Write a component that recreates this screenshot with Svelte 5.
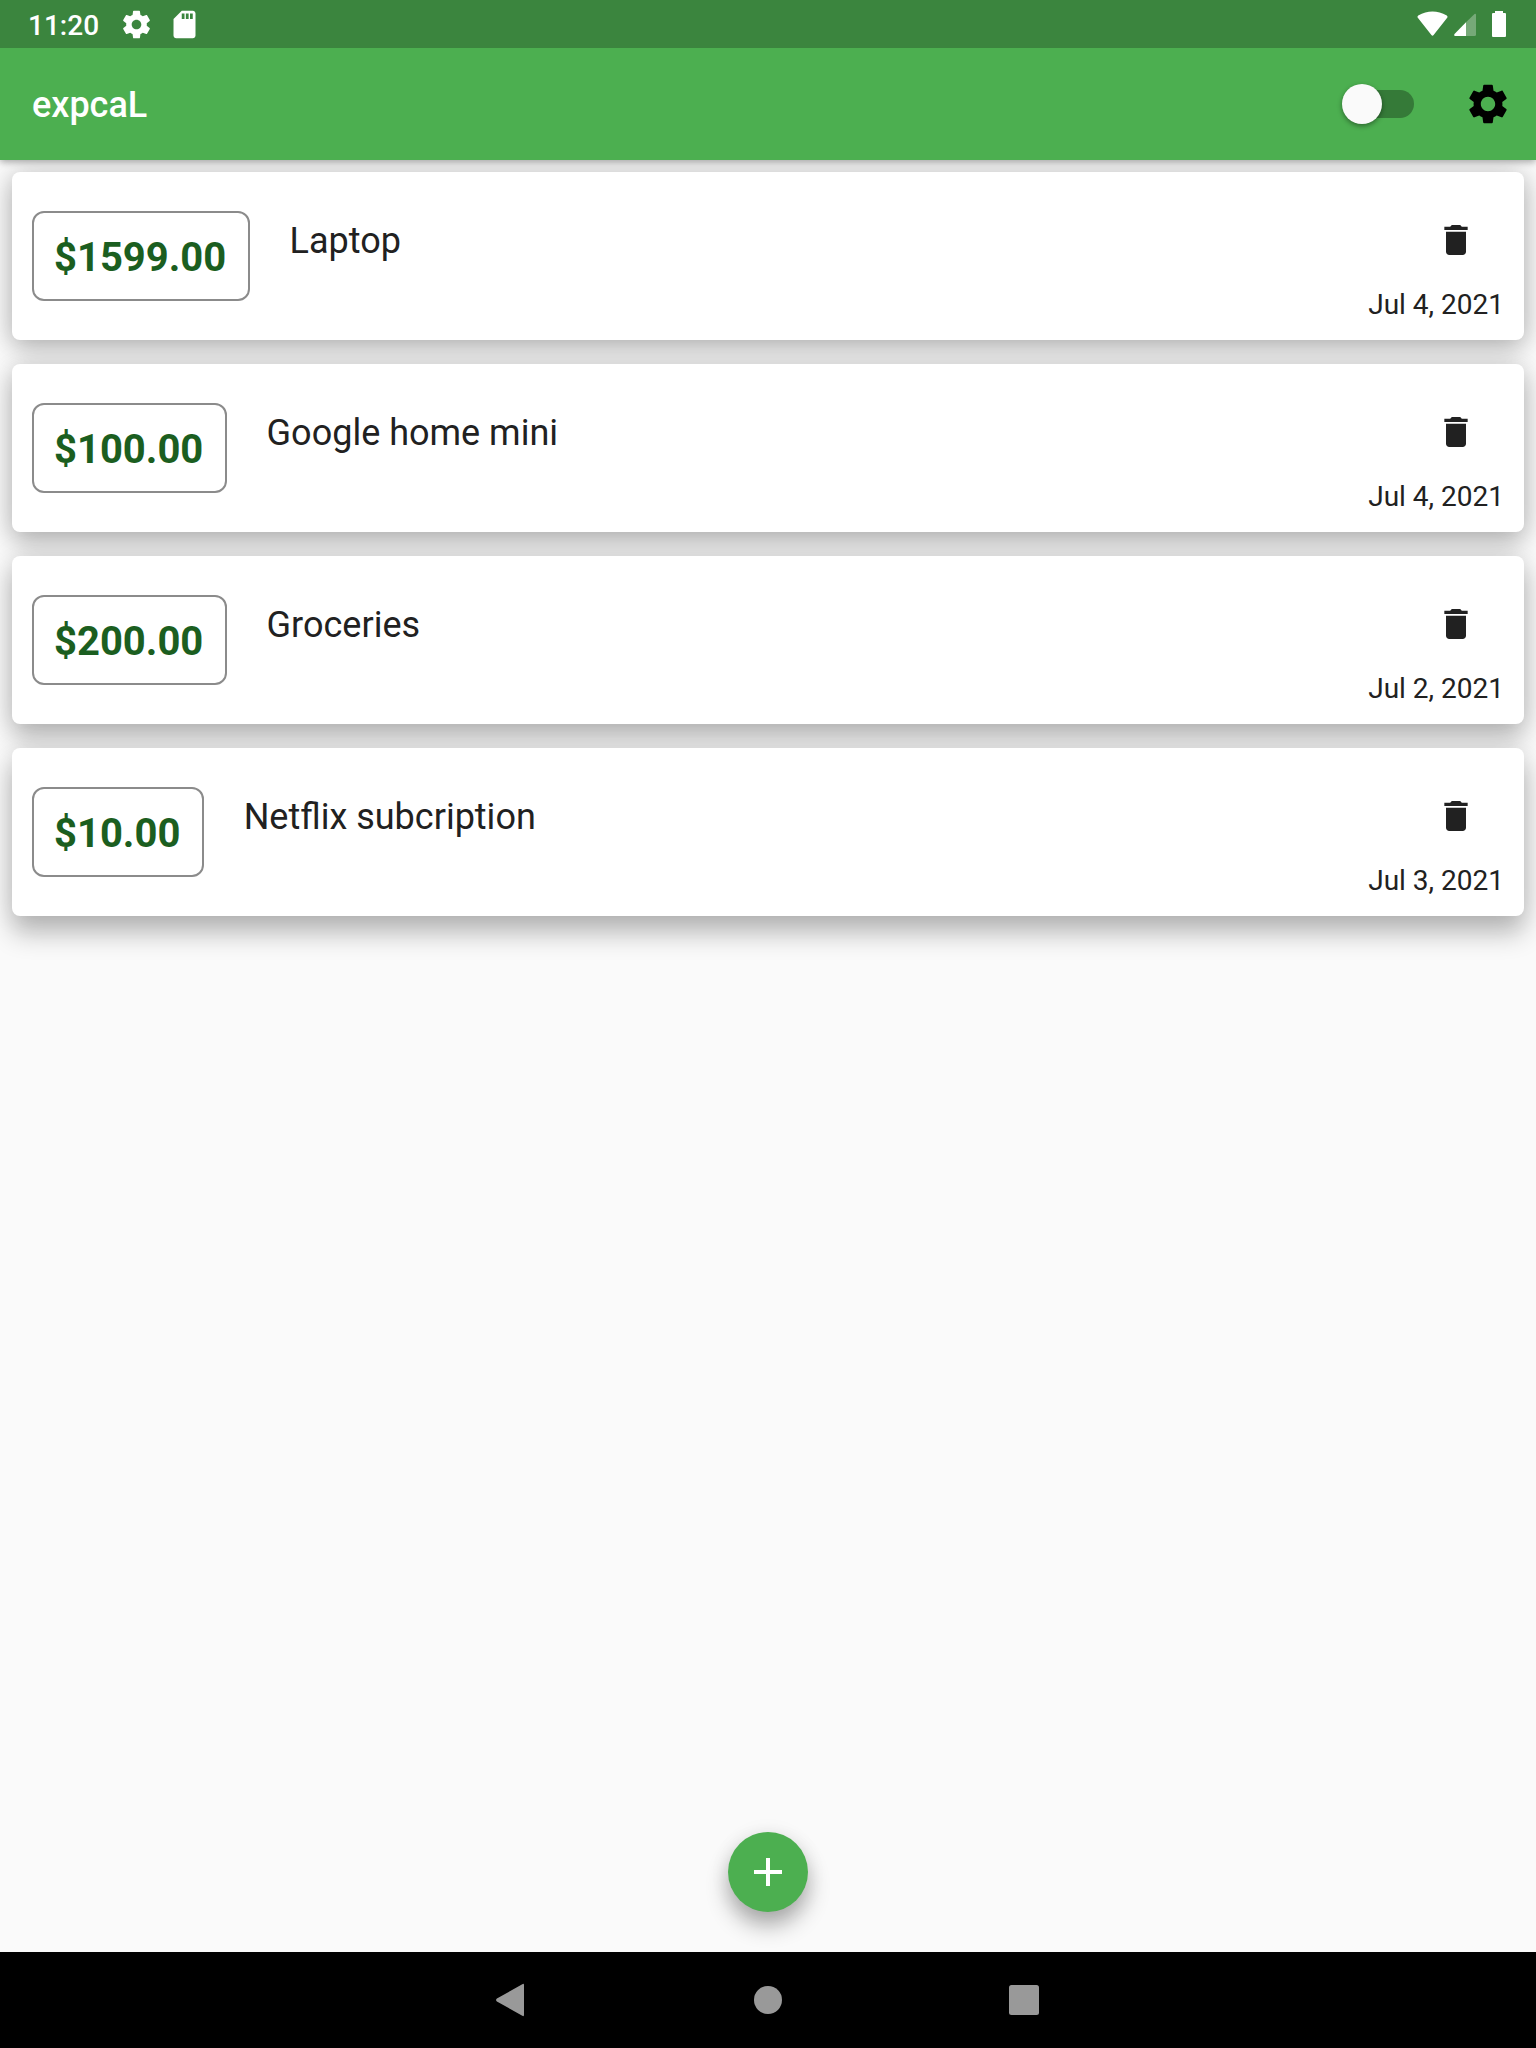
<script>
  const expenses = [
    { amount: '$1599.00', title: 'Laptop', date: 'Jul 4, 2021' },
    { amount: '$100.00', title: 'Google home mini', date: 'Jul 4, 2021' },
    { amount: '$200.00', title: 'Groceries', date: 'Jul 2, 2021' },
    { amount: '$10.00', title: 'Netflix subcription', date: 'Jul 3, 2021' }
  ];
</script>

<div class="screen">
  <header class="top">
    <div class="status">
      <span class="clock">11:20</span>
      <svg class="status-icon gear" viewBox="0 0 24 24"><path d="M19.43 12.98c.04-.32.07-.64.07-.98s-.03-.66-.07-.98l2.11-1.65c.19-.15.24-.42.12-.64l-2-3.46c-.12-.22-.39-.3-.61-.22l-2.49 1c-.52-.4-1.08-.73-1.69-.98l-.38-2.65C14.46 2.18 14.25 2 14 2h-4c-.25 0-.46.18-.49.42l-.38 2.65c-.61.25-1.17.59-1.69.98l-2.49-1c-.23-.09-.49 0-.61.22l-2 3.46c-.13.22-.07.49.12.64l2.11 1.65c-.04.32-.07.65-.07.98s.03.66.07.98l-2.11 1.65c-.19.15-.24.42-.12.64l2 3.46c.12.22.39.3.61.22l2.49-1c.52.4 1.08.73 1.69.98l.38 2.65c.03.24.24.42.49.42h4c.25 0 .46-.18.49-.42l.38-2.65c.61-.25 1.17-.59 1.69-.98l2.49 1c.23.09.49 0 .61-.22l2-3.46c.12-.22.07-.49-.12-.64l-2.11-1.65zM12 15.5c-1.93 0-3.5-1.57-3.5-3.5s1.57-3.5 3.5-3.5 3.5 1.57 3.5 3.5-1.57 3.5-3.5 3.5z" /></svg>
      <svg class="status-icon" viewBox="0 0 24 24"><path d="M18 2h-8L4.02 8 4 20c0 1.1.9 2 2 2h12c1.1 0 2-.9 2-2V4c0-1.1-.9-2-2-2zm-6 6h-2V4h2v4zm3 0h-2V4h2v4zm3 0h-2V4h2v4z" /></svg>
      <svg class="radios" width="92" height="48" viewBox="0 0 92 48">
        <path d="M2.2 18.3Q.4 16.8 2.2 15.4Q16.5 7.8 30.8 15.4Q32.6 16.8 30.8 18.3L17.6 35Q16.5 36.3 15.4 35Z" />
        <path d="M58.5 14Q60 13 60 15V34.500Q60 36 58.500 36H50V22.200Z" opacity=".3" />
        <path d="M50 22.200V36H39Q37.300 35.500 38.500 34Z" />
        <path d="M79 11h8v2h2q1 0 1 1v22q0 1-1 1H77q-1 0-1-1V14q0-1 1-1h2z" />
      </svg>
    </div>
    <div class="bar">
      <h1>expcaL</h1>
      <div class="switch"><span class="thumb"></span></div>
      <svg class="settings" viewBox="0 0 24 24"><path d="M19.14,12.94c0.04-0.3,0.06-0.61,0.06-0.94c0-0.32-0.02-0.64-0.07-0.94l2.03-1.58c0.18-0.14,0.23-0.41,0.12-0.61l-1.92-3.32c-0.12-0.22-0.37-0.29-0.59-0.22l-2.39,0.96c-0.5-0.38-1.03-0.7-1.62-0.94L14.4,2.81c-0.04-0.24-0.24-0.41-0.48-0.41h-3.84c-0.24,0-0.43,0.17-0.47,0.41L9.25,5.35C8.66,5.59,8.12,5.92,7.63,6.29L5.24,5.33c-0.22-0.08-0.47,0-0.59,0.22L2.74,8.87C2.62,9.08,2.66,9.34,2.86,9.48l2.03,1.58C4.84,11.36,4.8,11.69,4.8,12s0.02,0.64,0.07,0.94l-2.03,1.58c-0.18,0.14-0.23,0.41-0.12,0.61l1.92,3.32c0.12,0.22,0.37,0.29,0.59,0.22l2.39-0.96c0.5,0.38,1.03,0.7,1.62,0.94l0.36,2.54c0.05,0.24,0.24,0.41,0.48,0.41h3.84c0.24,0,0.44-0.17,0.47-0.41l0.36-2.54c0.59-0.24,1.13-0.56,1.62-0.94l2.39,0.96c0.22,0.08,0.47,0,0.59-0.22l1.92-3.32c0.12-0.22,0.07-0.47-0.12-0.61L19.14,12.94z M12,15.6c-1.98,0-3.6-1.62-3.6-3.6s1.62-3.6,3.6-3.6s3.6,1.62,3.6,3.6S13.98,15.6,12,15.6z" /></svg>
    </div>
  </header>

  <main>
    {#each expenses as expense}
      <article class="card">
        <div class="amount">{expense.amount}</div>
        <h2>{expense.title}</h2>
        <div class="side">
          <svg class="trash" viewBox="0 0 24 24"><path d="M6 19c0 1.1.9 2 2 2h8c1.1 0 2-.9 2-2V7H6v12zM19 4h-3.500l-1-1h-5l-1 1H5v2h14V4z" /></svg>
          <time>{expense.date}</time>
        </div>
      </article>
    {/each}
  </main>

  <div class="actions">
    <button class="fab" aria-label="Add expense">
      <svg width="48" height="48" viewBox="0 0 24 24"><path d="M19 13h-6v6h-2v-6H5v-2h6V5h2v6h6v2z" /></svg>
    </button>
  </div>

  <nav>
    <svg width="32" height="36" viewBox="0 0 32 36"><path d="M26.300 2.200Q28 1.200 28 3V33Q28 34.800 26.300 33.800L.9 19.400Q-.8 18 .9 16.600Z" /></svg>
    <svg width="32" height="32" viewBox="0 0 32 32"><circle cx="16" cy="16" r="14" /></svg>
    <svg width="32" height="32" viewBox="0 0 32 32"><rect x="1" y="1" width="30" height="30" rx="2.500" /></svg>
  </nav>
</div>

<style>
  :global(body) {
    margin: 0;
  }
  .screen {
    display: flex;
    flex-direction: column;
    height: 2048px;
    background: #fafafa;
    color: #212121;
    font-family: Roboto, sans-serif;
    overflow: hidden;
  }
  .top {
    position: relative;
    z-index: 1;
    flex: none;
    background: #4caf50;
    box-shadow: 0 2px 7px rgba(0, 0, 0, 0.34);
  }
  .status {
    display: flex;
    align-items: center;
    height: 48px;
    padding: 0 28px;
    background: #3b853e;
    color: #fff;
    box-sizing: border-box;
  }
  .clock {
    width: 92px;
    font-size: 28px;
    font-weight: 500;
    line-height: 46px;
    padding-top: 4px;
  }
  .status-icon {
    width: 33px;
    height: 33px;
    fill: #fff;
  }
  .gear {
    margin-right: 15px;
  }
  .radios {
    margin-left: auto;
    fill: #fff;
  }
  .bar {
    display: flex;
    align-items: center;
    height: 112px;
    padding: 0 24px 0 32px;
  }
  h1 {
    margin: 0 auto 0 0;
    padding-top: 2px;
    font-size: 36px;
    font-weight: 500;
    color: #fff;
  }
  .switch {
    display: flex;
    align-items: center;
    width: 66px;
    height: 28px;
    margin-right: 50px;
    border-radius: 14px;
    background: #357a38;
  }
  .thumb {
    flex: none;
    width: 40px;
    height: 40px;
    margin-left: -6px;
    border-radius: 50%;
    background: #fafafa;
    box-shadow: 0 2px 5px rgba(0, 0, 0, 0.4);
  }
  .settings {
    width: 48px;
    height: 48px;
    fill: #000;
  }
  main {
    flex: 1;
    display: flex;
    flex-direction: column;
    gap: 24px;
    padding: 12px;
  }
  /* The key shadow falls further the lower a card sits under the top light. */
  .card {
    --drop: 8px;
    display: flex;
    height: 168px;
    padding: 0 20px;
    box-sizing: border-box;
    border-radius: 8px;
    background: #fff;
    box-shadow: 0 var(--drop) 26px rgba(0, 0, 0, 0.24), 0 0 26px rgba(0, 0, 0, 0.12);
  }
  .card:nth-child(2) {
    --drop: 11px;
  }
  .card:nth-child(3) {
    --drop: 14px;
  }
  .card:nth-child(4) {
    --drop: 18px;
  }
  .amount {
    align-self: center;
    height: 90px;
    padding: 0 21.300px 0 20px;
    box-sizing: border-box;
    border: 2px solid #8b8b8b;
    border-radius: 12px;
    color: #1b5e20;
    font-size: 40px;
    font-weight: 700;
    line-height: 89px;
  }
  h2 {
    margin: 47px 0 0 40px;
    font-size: 36px;
    font-weight: 400;
    line-height: 44px;
  }
  .side {
    display: flex;
    flex-direction: column;
    align-items: flex-end;
    margin-left: auto;
    padding-top: 48px;
  }
  .trash {
    width: 40px;
    height: 40px;
    margin-right: 28px;
    fill: #212121;
  }
  time {
    margin-top: 28px;
    font-size: 28px;
    line-height: 34px;
  }
  .actions {
    display: flex;
    justify-content: center;
    padding-bottom: 40px;
  }
  .fab {
    display: grid;
    place-items: center;
    width: 80px;
    height: 80px;
    padding: 0;
    border: 0;
    border-radius: 50%;
    background: #4caf50;
    box-shadow: 0 14px 22px rgba(0, 0, 0, 0.3), 0 2px 20px rgba(0, 0, 0, 0.08);
  }
  .fab svg {
    fill: #fff;
  }
  nav {
    position: relative;
    display: flex;
    flex: none;
    align-items: center;
    justify-content: center;
    gap: 224px;
    height: 96px;
    background: #000;
  }
  nav svg {
    fill: #999;
  }
</style>
